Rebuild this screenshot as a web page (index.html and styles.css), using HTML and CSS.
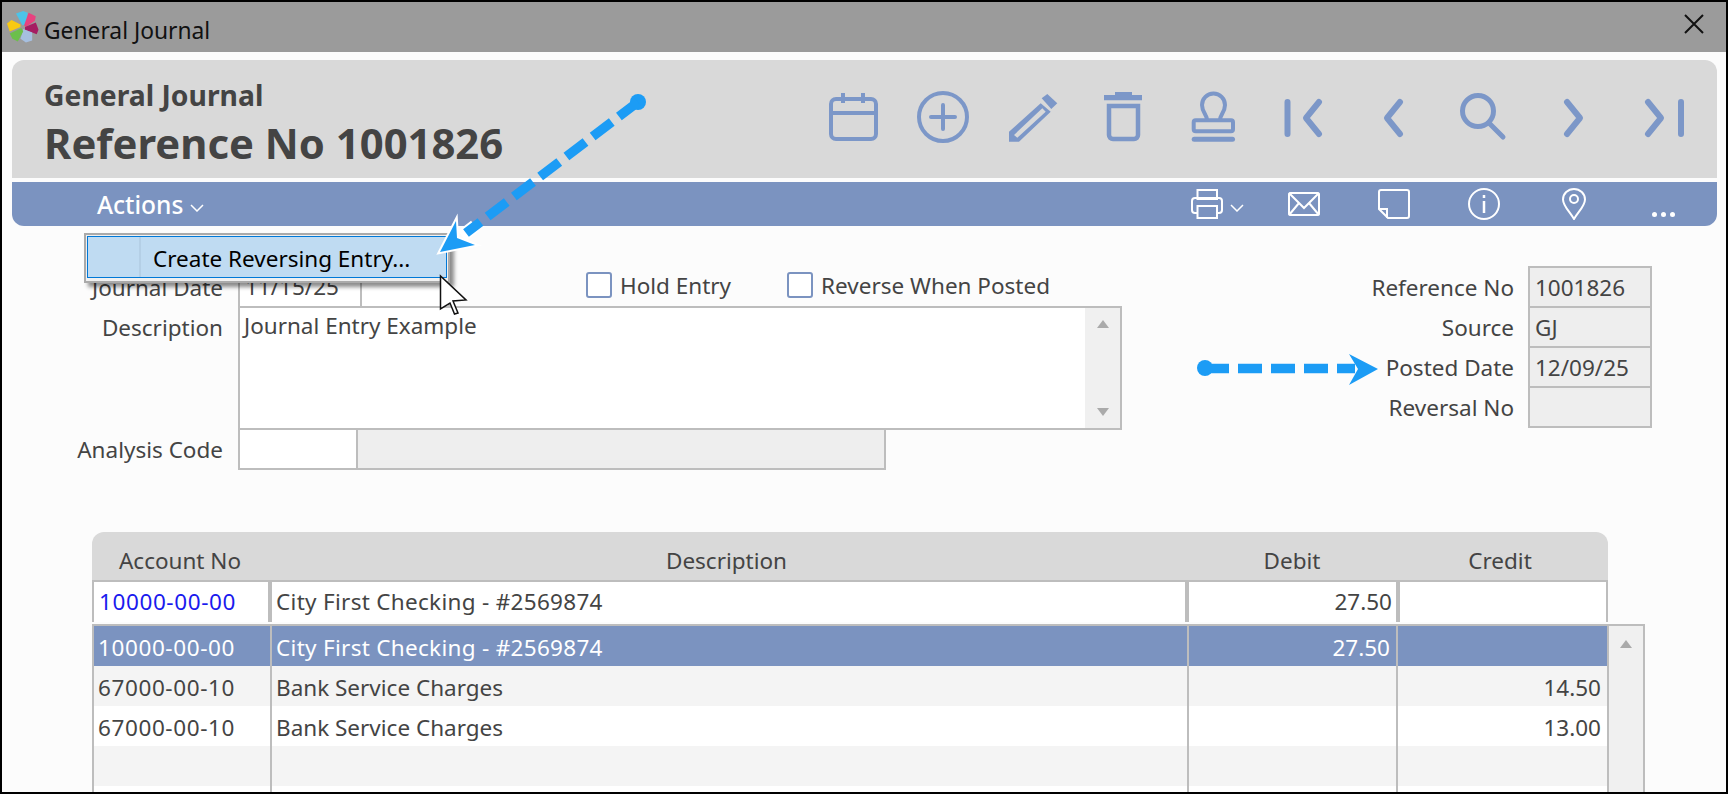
FILE: index.html
```html
<!DOCTYPE html>
<html lang="en">
<head>
  <meta charset="UTF-8" />
  <title>General Journal</title>
  <link rel="stylesheet" href="styles.css">
</head>
<body>
  <div class="window">
    <div class="titlebar">
      <svg class="logo" viewBox="0 0 40 40">
        <g transform="translate(18 19)">
          <path fill="#4cc3e8" d="M-1 -2 L-8 -15 L0 -18 L5 -16 L3 -3Z"/>
          <path fill="#e8427f" d="M1 -2 L6 -16 L14 -12 L13 -7 L3 0Z"/>
          <path fill="#a51d62" d="M2 0 L14 -5 L17 3 L15 8 L2 3Z"/>
          <path fill="#a6bfe0" d="M0 2 L10 6 L10 15 L3 17 L-3 13Z"/>
          <path fill="#6cbf4b" d="M-2 1 L0 5 L-6 16 L-12 13 L-15 7Z"/>
          <path fill="#f8c912" d="M-3 0 L-15 5 L-18 -4 L-13 -8 L-3 -3Z"/>
        </g>
      </svg>
      <span class="titlebar-text">General Journal</span>
      <svg class="close" viewBox="0 0 20 20"><path d="M1 1 L19 19 M19 1 L1 19"/></svg>
    </div>

    <div class="content">
      <div class="header">
        <div class="header-text">
          <div class="header-sub">General Journal</div>
          <div class="header-title">Reference No 1001826</div>
        </div>
        <div class="icon-grid">
          <div class="icon-cell"><svg class="tool" viewBox="0 0 60 60"><rect x="9" y="12" width="45" height="40" rx="5"/><path d="M9 26H54M21 6V16M41 6V16"/></svg></div>
          <div class="icon-cell"><svg class="tool" viewBox="0 0 60 60"><circle cx="31" cy="30" r="24"/><path d="M19 30H43M31 18V42" stroke-linecap="round"/></svg></div>
          <div class="icon-cell"><svg class="tool tool-fill" viewBox="0 0 60 60"><path fill-rule="evenodd" d="M6 54.7V44.7L37.7 16.3L47.7 24.7L16 54.7ZM11 48L14.3 50.7L42.7 24.7L39.3 21.3Z"/><path d="M38.7 11.3L44.3 7L54.3 16.3L48.3 22Z"/></svg></div>
          <div class="icon-cell"><svg class="tool" viewBox="0 0 60 60"><path class="solid" d="M11 8H22V5H39V8H49V13.3H11Z"/><path stroke-width="4.5" d="M16 19H45V48A4 4 0 0 1 41 52H20A4 4 0 0 1 16 48Z"/></svg></div>
          <div class="icon-cell"><svg class="tool" viewBox="0 0 60 60"><path d="M24 33C24 28 19 25 19 18A11.5 11.5 0 0 1 42 18C42 25 37 28 37 33"/><rect x="10.7" y="33.3" width="39.3" height="11" rx="2"/><rect class="solid" x="8.7" y="49.7" width="43.3" height="5" rx="2.5"/></svg></div>
          <div class="icon-cell"><svg class="tool tool-nav" viewBox="0 0 60 60"><path d="M14.5 15V47M46 15L33 31L46 47"/></svg></div>
          <div class="icon-cell"><svg class="tool tool-nav" viewBox="0 0 60 60"><path d="M37 15L24 31L37 47"/></svg></div>
          <div class="icon-cell"><svg class="tool tool-nav tool-search" viewBox="0 0 60 60"><circle cx="24" cy="24" r="15.5"/><path d="M35 36L49 50"/></svg></div>
          <div class="icon-cell"><svg class="tool tool-nav" viewBox="0 0 60 60"><path d="M23 15L36 31L23 47"/></svg></div>
          <div class="icon-cell"><svg class="tool tool-nav" viewBox="0 0 60 60"><path d="M14 15L27 31L14 47M47 15V47"/></svg></div>
        </div>
      </div>

      <div class="actionbar">
        <div class="actions">
          <span>Actions</span>
          <svg class="caret caret-actions" viewBox="0 0 14 8"><path d="M1 1L7 7L13 1"/></svg>
        </div>
        <div class="icon-grid icon-grid-small">
          <div class="icon-cell icon-cell-print">
            <svg class="mini print" viewBox="0 0 32 30"><rect x="6.5" y="1" width="19.5" height="9"/><rect x="1" y="9" width="30" height="15" rx="3"/><rect class="mask" x="6.5" y="17" width="19.5" height="12"/></svg>
            <svg class="caret caret-print" viewBox="0 0 14 8"><path d="M1 1L7 7L13 1"/></svg>
          </div>
          <div class="icon-cell"><svg class="mini envelope" viewBox="0 0 32 24"><rect x="1" y="1" width="30" height="22" rx="1.5"/><path d="M1 1L16 16L31 1M1 23L11 11M31 23L21 11"/></svg></div>
          <div class="icon-cell"><svg class="mini note" viewBox="0 0 32 30"><path d="M3 1H29A2 2 0 0 1 31 3V27A2 2 0 0 1 29 29H10L1 20V3A2 2 0 0 1 3 1ZM1 20H9V29"/></svg></div>
          <div class="icon-cell"><svg class="mini info" viewBox="0 0 32 32"><circle cx="16" cy="16" r="15"/><path d="M16 13V25M16 7V10" stroke-width="2.5"/></svg></div>
          <div class="icon-cell"><svg class="mini pin" viewBox="0 0 24 32"><path d="M12 31C8 24 1 18 1 11.5A11 10.5 0 0 1 23 11.5C23 18 16 24 12 31Z"/><circle cx="12" cy="11" r="4"/></svg></div>
          <div class="icon-cell icon-cell-dots"><span class="dot"></span><span class="dot"></span><span class="dot"></span></div>
        </div>
      </div>

      <div class="form">
        <div class="form-left">
          <div class="form-row form-row-date">
            <label class="form-label">Journal Date</label>
            <div class="field field-date">11/15/25</div>
            <div class="field field-period"></div>
            <div class="check-group check-first"><span class="check"></span>Hold Entry</div>
            <div class="check-group"><span class="check"></span>Reverse When Posted</div>
          </div>
          <div class="form-row">
            <label class="form-label">Description</label>
            <div class="textarea">
              <div class="textarea-text">Journal Entry Example</div>
              <div class="scroll-strip">
                <span class="arrow-up"></span>
                <span class="arrow-down"></span>
              </div>
            </div>
          </div>
          <div class="form-row">
            <label class="form-label">Analysis Code</label>
            <div class="field field-code"></div>
            <div class="field field-code-name"></div>
          </div>
        </div>

        <div class="form-right">
          <div class="info-row"><label class="info-label">Reference No</label><div class="info-value">1001826</div></div>
          <div class="info-row"><label class="info-label">Source</label><div class="info-value">GJ</div></div>
          <div class="info-row"><label class="info-label">Posted Date</label><div class="info-value">12/09/25</div></div>
          <div class="info-row"><label class="info-label">Reversal No</label><div class="info-value"></div></div>
        </div>
      </div>

      <div class="table">
        <div class="table-head">
          <div class="th">Account No</div>
          <div class="th">Description</div>
          <div class="th">Debit</div>
          <div class="th">Credit</div>
        </div>
        <div class="entry">
          <div class="entry-cell entry-account">10000-00-00</div>
          <div class="entry-cell entry-desc wide-text">City First Checking - #2569874</div>
          <div class="entry-cell entry-num">27.50</div>
          <div class="entry-cell entry-num"></div>
        </div>
        <div class="list">
          <div class="rows">
            <div class="row row-selected"><div class="cell cell-account">10000-00-00</div><div class="cell cell-desc wide-text">City First Checking - #2569874</div><div class="cell cell-num">27.50</div><div class="cell cell-num"></div></div>
            <div class="row row-alt"><div class="cell cell-account">67000-00-10</div><div class="cell cell-desc">Bank Service Charges</div><div class="cell cell-num"></div><div class="cell cell-num">14.50</div></div>
            <div class="row"><div class="cell cell-account">67000-00-10</div><div class="cell cell-desc">Bank Service Charges</div><div class="cell cell-num"></div><div class="cell cell-num">13.00</div></div>
            <div class="row row-alt"><div class="cell"></div><div class="cell cell-desc"></div><div class="cell cell-num"></div><div class="cell cell-num"></div></div>
            <div class="row"><div class="cell"></div><div class="cell cell-desc"></div><div class="cell cell-num"></div><div class="cell cell-num"></div></div>
          </div>
          <div class="list-scroll"><span class="arrow-up"></span></div>
        </div>
      </div>
    </div>

    <!-- Popup menu -->
    <div class="menu">
      <div class="menu-item">
        <span class="menu-gutter"></span>
        <span class="menu-label">Create Reversing Entry...</span>
      </div>
    </div>

    <!-- Callout arrows and pointer -->
    <svg class="callouts" viewBox="0 0 1728 794">
      <path class="halo" d="M456 221L457 238L475 245L440 252Z"/>
      <path class="halo-line" d="M475 226L462 236"/>
      <circle class="callout-fill" cx="638" cy="102" r="8"/>
      <path class="callout-line" d="M638 102L466 233"/>
      <path class="callout-fill" d="M456 221L457 238L475 245L440 252Z"/>
      <circle class="callout-fill" cx="1205" cy="368" r="8"/>
      <path class="callout-line" d="M1205 368.5H1355"/>
      <path class="callout-fill" d="M1349 354L1358 369L1349 385L1378 369Z"/>
      <path class="pointer" d="M440.5 276V309L450 303L454.5 314L458 313L453 301L466 300Z"/>
    </svg>
  </div>
</body>
</html>
```

FILE: styles.css
```css
* {
  box-sizing: border-box;
}

html, body {
  margin: 0;
  height: 100%;
  overflow: hidden;
}

body {
  font-family: "Noto Sans", sans-serif;
  font-size: 22.5px;
  color: #444;
  background: #fcfcfc;
}

.window {
  position: relative;
  width: 1728px;
  height: 794px;
  border: 2px solid #000;
  overflow: hidden;
  background: #fcfcfc;
}

/* Title bar */
.titlebar {
  height: 50px;
  background: #9b9b9b;
  display: flex;
  align-items: center;
  color: #111;
  padding-left: 5px;
}

.logo {
  width: 36px;
  height: 36px;
  margin-top: 2px;
}

.titlebar-text {
  font-size: 22.8px;
  margin-left: 1px;
  margin-top: 6px;
}

.close {
  width: 20px;
  height: 20px;
  margin-left: auto;
  margin-right: 22px;
  margin-top: -6px;
}

.close path {
  stroke: #111;
  stroke-width: 2;
  fill: none;
}

/* Header */
.content {
  padding-top: 8px;
}

.header {
  margin: 0 9px 0 10px;
  height: 118px;
  background: #d9d9d9;
  border-radius: 12px 12px 0 0;
  display: flex;
  justify-content: space-between;
}

.header-text {
  padding: 17px 0 0 32px;
  color: #444;
  font-weight: 700;
}

.header-sub {
  font-size: 28.3px;
  line-height: 36px;
}

.header-title {
  font-size: 41.8px;
  line-height: 52px;
  margin-top: 4px;
}

.icon-grid {
  display: flex;
  padding-right: 8px;
  padding-top: 27px;
}

.icon-cell {
  width: 90.2px;
  display: flex;
  justify-content: center;
}

.tool {
  width: 60px;
  height: 60px;
  fill: none;
  stroke: #7c97c8;
  stroke-width: 4;
}

.tool .solid {
  fill: #7c97c8;
  stroke: none;
}

.tool-fill {
  fill: #7c97c8;
  stroke: none;
}

.tool-nav {
  stroke-width: 6;
  stroke-linecap: round;
  stroke-linejoin: round;
}

.tool-search {
  stroke-width: 5;
}

/* Blue action bar */
.actionbar {
  margin: 4px 9px 0 10px;
  height: 44px;
  background: #7b93c0;
  border-radius: 0 0 12px 12px;
  display: flex;
  justify-content: space-between;
  color: #fff;
}

.actions {
  padding: 2px 0 0 85px;
  font-size: 24.5px;
  font-weight: 500;
  line-height: 42px;
  display: flex;
  align-items: center;
}

.caret {
  fill: none;
  stroke: #fff;
  stroke-width: 1.5;
}

.caret-actions {
  width: 14px;
  height: 8px;
  margin: 6px 0 0 7px;
}

.icon-grid-small {
  padding-top: 0;
  align-items: center;
}

.icon-cell-print {
  align-items: center;
  padding-left: 10px;
}

.caret-print {
  width: 14px;
  height: 8px;
  margin: 8px 0 0 7px;
}

.mini {
  fill: none;
  stroke: #fff;
  stroke-width: 2;
}

.print {
  width: 32px;
  height: 30px;
}

.print .mask {
  fill: #7b93c0;
}

.envelope {
  width: 32px;
  height: 24px;
  margin-left: 2px;
}

.note {
  width: 32px;
  height: 30px;
  margin-left: 2px;
}

.info {
  width: 32px;
  height: 32px;
}

.pin {
  width: 24px;
  height: 32px;
}

.icon-cell-dots {
  gap: 4px;
  align-items: flex-end;
  padding-bottom: 9px;
  align-self: stretch;
}

.dot {
  width: 5px;
  height: 5px;
  border-radius: 50%;
  background: #fff;
}

/* Form */
.form {
  display: flex;
  margin-top: 40px;
}

.form-left {
  width: 1230px;
  flex: none;
}

.form-row {
  display: flex;
  margin-top: -2px;
}

.form-row-date {
  height: 42px;
  margin-top: 0;
}

.form-label {
  width: 221px;
  height: 42px;
  margin-right: 15px;
  text-align: right;
  line-height: 44px;
  flex: none;
}

.field {
  border: 2px solid #bdbdbd;
  background: #fff;
  height: 42px;
  line-height: 38px;
  padding-left: 5px;
}

.field-date {
  width: 124px;
}

.field-period {
  width: 90px;
  margin-left: -2px;
}

.check-group {
  display: flex;
  align-items: center;
  height: 38px;
  margin-left: 56px;
  white-space: nowrap;
}

.check-first {
  margin-left: 136px;
}

.check {
  width: 26px;
  height: 26px;
  border: 2px solid #7b93c0;
  border-radius: 3px;
  background: #fff;
  margin-right: 8px;
}

.textarea {
  width: 884px;
  height: 124px;
  border: 2px solid #bdbdbd;
  background: #fff;
  display: flex;
}

.textarea-text {
  flex: 1;
  padding-left: 4px;
  line-height: 36px;
}

.scroll-strip {
  width: 35px;
  background: #f0f0f0;
  display: flex;
  flex-direction: column;
  align-items: center;
  justify-content: space-between;
  padding: 12px 0;
}

.arrow-up {
  width: 0;
  height: 0;
  border-left: 6px solid transparent;
  border-right: 6px solid transparent;
  border-bottom: 8px solid #aaa;
}

.arrow-down {
  width: 0;
  height: 0;
  border-left: 6px solid transparent;
  border-right: 6px solid transparent;
  border-top: 8px solid #aaa;
}

.field-code {
  width: 120px;
}

.field-code-name {
  width: 530px;
  margin-left: -2px;
  background: #eee;
}

.form-right {
  flex: none;
  width: 420px;
}

.info-row {
  display: flex;
  height: 42px;
  margin-top: -2px;
}

.info-row:first-child {
  margin-top: 0;
}

.info-label {
  width: 282px;
  margin-right: 14px;
  text-align: right;
  line-height: 44px;
  flex: none;
}

.info-value {
  width: 124px;
  height: 42px;
  border: 2px solid #bdbdbd;
  background: #eee;
  padding-left: 5px;
  line-height: 40px;
}

/* Table */
.table {
  margin: 62px 0 0 90px;
}

.table-head {
  width: 1516px;
  height: 48px;
  background: #d9d9d9;
  border-radius: 12px 12px 0 0;
  display: grid;
  grid-template-columns: 176px 917px 214px 202px;
  padding-top: 10px;
  text-align: center;
  line-height: 38px;
}

.entry {
  width: 1516px;
  height: 42px;
  border: 2px solid #bdbdbd;
  background: #bdbdbd;
  display: grid;
  grid-template-columns: 174px 913px 207px 206px;
  column-gap: 4px;
}

.entry-cell {
  background: #fff;
  padding-left: 5px;
  line-height: 40px;
}

.entry-account {
  color: #1a1aee;
  letter-spacing: 0.6px;
}

.entry-desc {
  padding-left: 4px;
}

.entry-num {
  text-align: right;
  padding-right: 4px;
}

.wide-text {
  letter-spacing: 0.3px;
}

.list {
  margin-top: 2px;
  display: flex;
  width: 1553px;
  border-top: 2px solid #bdbdbd;
  border-left: 2px solid #bdbdbd;
  border-right: 2px solid #bdbdbd;
}

.rows {
  flex: none;
  width: 1515px;
}

.row {
  display: grid;
  grid-template-columns: 178px 917px 209px 211px;
  height: 40px;
  background: #fff;
}

.row-alt {
  background: #f4f4f4;
}

.row-selected {
  background: #7b93c0;
  color: #fff;
}

.cell {
  border-right: 2px solid #bdbdbd;
  padding-left: 4px;
  line-height: 44px;
}

.cell-account {
  letter-spacing: 0.6px;
}

.cell-desc {
  padding-left: 4px;
}

.cell-num {
  text-align: right;
  padding-right: 6px;
}

.list-scroll {
  flex: 1;
  background: #f0f0f0;
  display: flex;
  justify-content: center;
  padding-top: 14px;
  align-items: flex-start;
}

/* Overlays */
.menu {
  position: absolute;
  left: 82px;
  top: 231px;
  width: 366px;
  height: 50px;
  background: #f0f0f0;
  border: 2px solid #aaa;
  padding: 1px;
  box-shadow: 4px 4px 4px rgba(0, 0, 0, 0.45);
}

.menu-item {
  height: 42px;
  background: #bfdbf2;
  border: 1px solid #0078d7;
  display: flex;
  color: #000;
  line-height: 44px;
}

.menu-gutter {
  width: 53px;
  border-right: 2px solid #b4cfe6;
}

.menu-label {
  padding-left: 12px;
}

.callouts {
  position: absolute;
  left: -2px;
  top: -2px;
  width: 1728px;
  height: 794px;
  pointer-events: none;
}

.callout-fill {
  fill: #1c9cf5;
}

.callout-line {
  fill: none;
  stroke: #1c9cf5;
  stroke-width: 9.5;
  stroke-dasharray: 24 9;
}

.halo {
  fill: #fff;
  stroke: #fff;
  stroke-width: 4;
}

.halo-line {
  stroke: #fff;
  stroke-width: 13;
}

.pointer {
  fill: #fff;
  stroke: #111;
  stroke-width: 1.5;
}
```
